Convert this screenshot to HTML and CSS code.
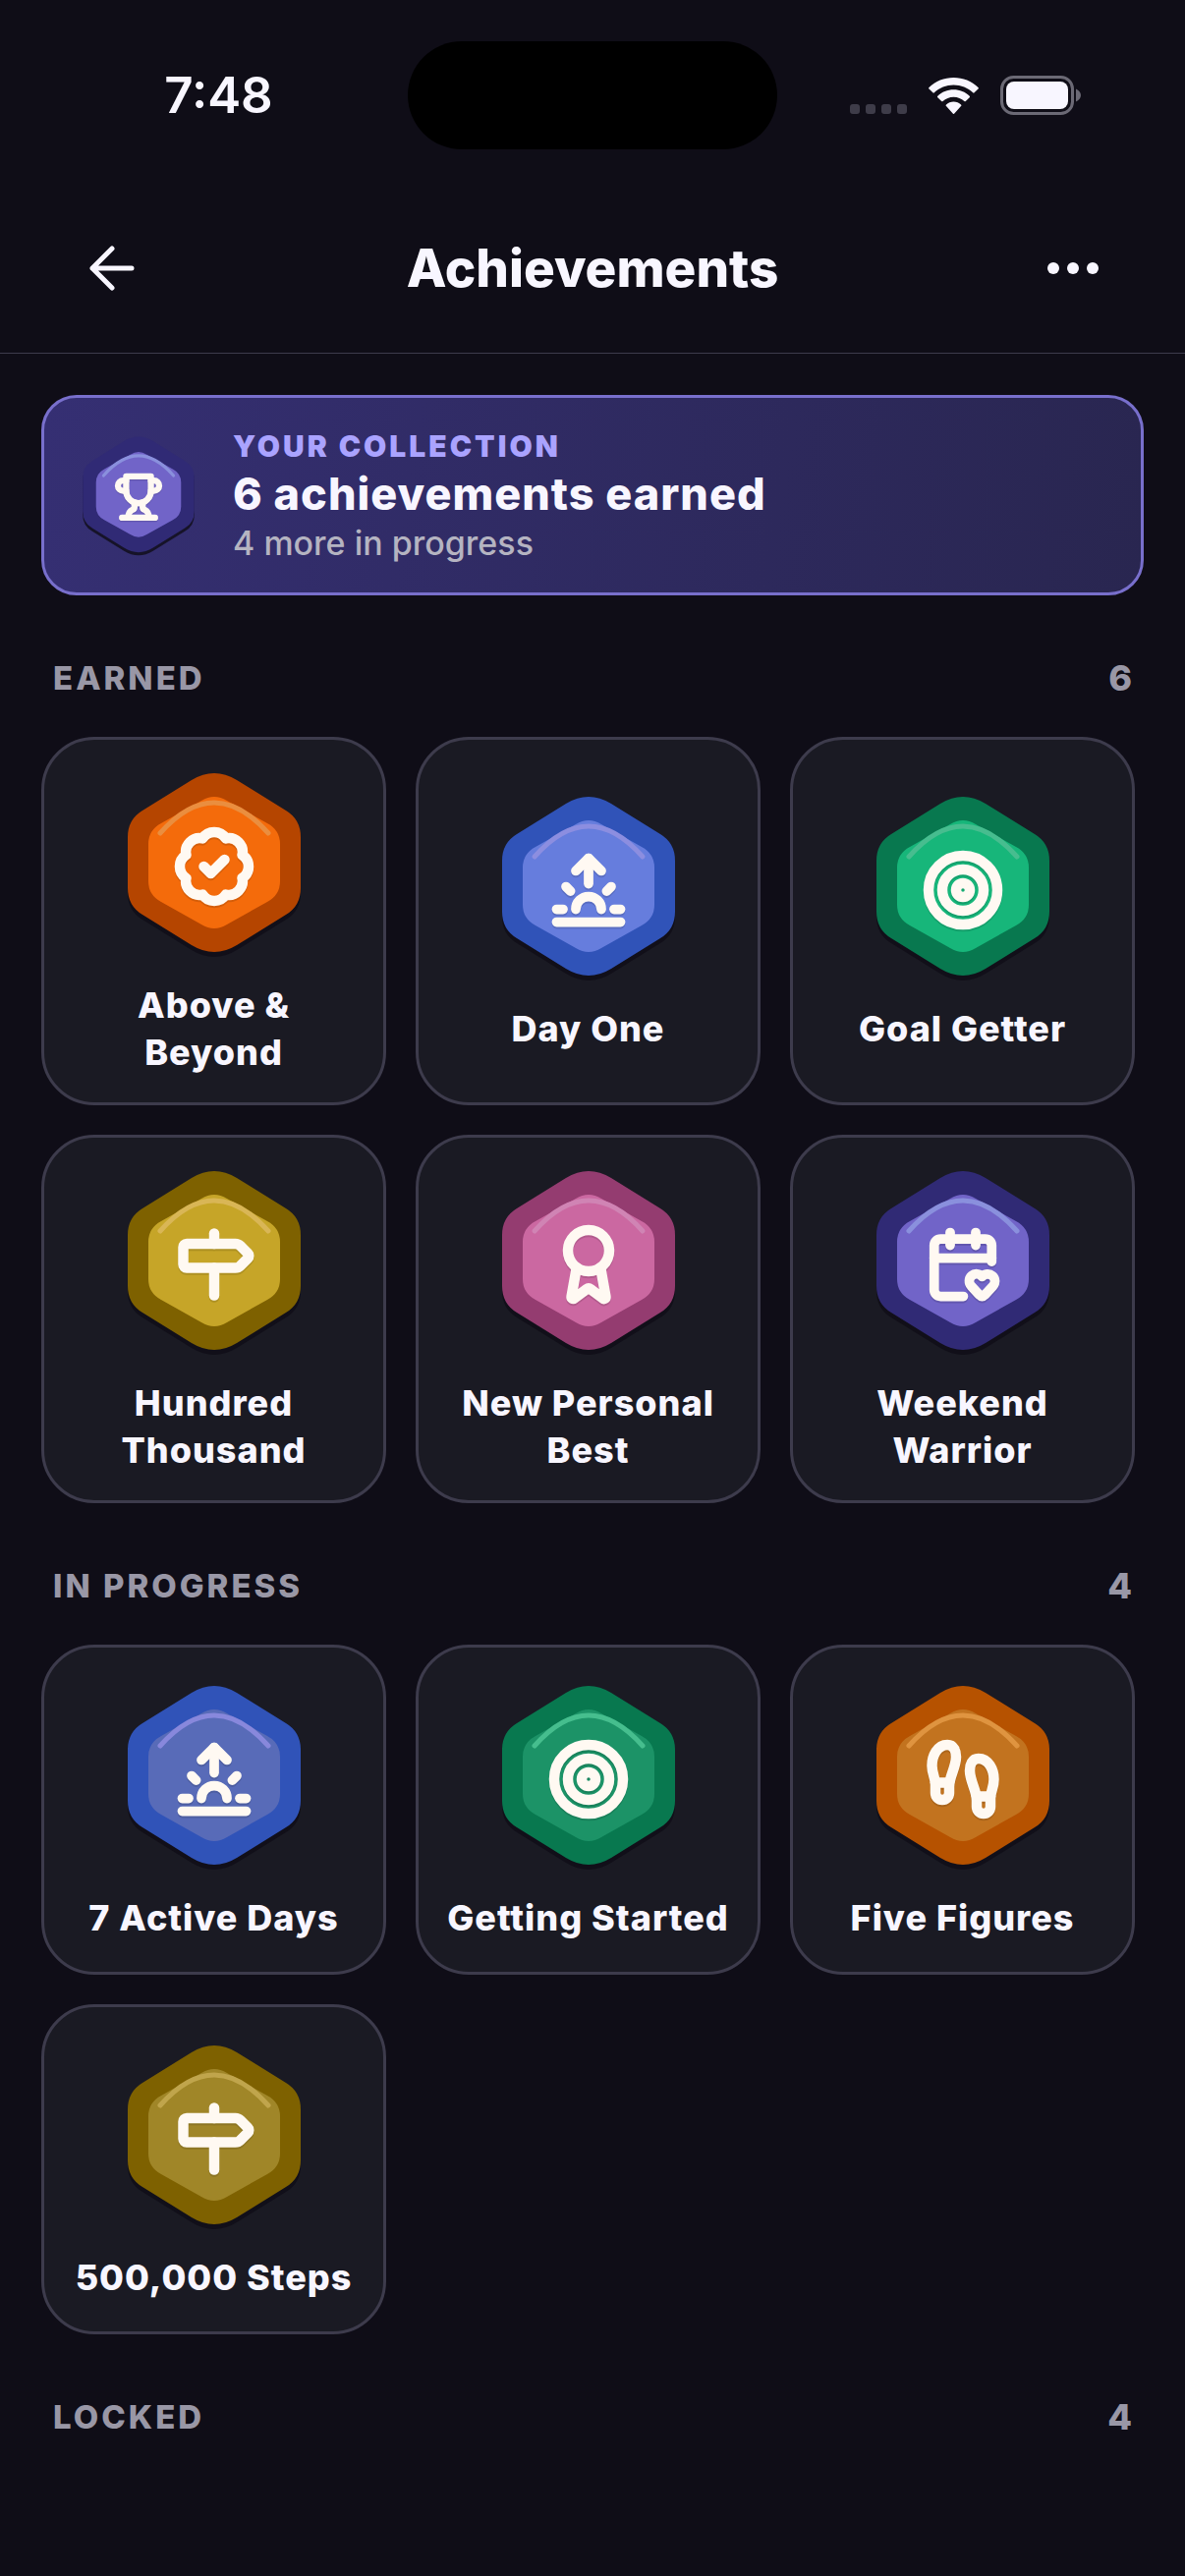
FILE: index.html
```html
<!DOCTYPE html>
<html lang="en">
  <head>
    <meta charset="UTF-8" />
    <meta name="viewport" content="width=device-width, initial-scale=1.0" />
    <title>Achievements</title>
    <link rel="stylesheet" href="styles.css">
  </head>
  <body>
    <!-- shared badge shapes and icons -->
    <svg class="sprite" aria-hidden="true">
      <symbol id="hex" viewBox="-96 -98 192 198">
        <path class="hex-shadow" d="M-23 -79Q0 -93 23 -79L73 -48Q88 -39 88 -21V31Q88 49 73 58L23 89Q0 103 -23 89L-73 58Q-88 49 -88 31V-21Q-88 -39 -73 -48Z" />
        <path class="hex-outer" d="M-23 -84Q0 -98 23 -84L73 -53Q88 -44 88 -26V26Q88 44 73 53L23 84Q0 98 -23 84L-73 53Q-88 44 -88 26V-26Q-88 -44 -73 -53Z" />
        <path class="hex-inner" d="M-13 -63Q0 -71 13 -63L54 -40Q67 -33 67 -19V19Q67 33 54 40L13 63Q0 71 -13 63L-54 40Q-67 33 -67 19V-19Q-67 -33 -54 -40Z" />
        <path class="hex-shine" d="M-55 -30Q0 -92 55 -30" />
      </symbol>
      <symbol id="trophy" viewBox="0 0 24 24">
        <path d="M6 9H4.5a2.5 2.5 0 0 1 0-5H6" />
        <path d="M18 9h1.5a2.5 2.5 0 0 0 0-5H18" />
        <path d="M4 22h16" />
        <path d="M10 14.66V17c0 .55-.47.98-.97 1.21C7.85 18.75 7 20.24 7 22" />
        <path d="M14 14.66V17c0 .55.47.98.97 1.21C16.15 18.75 17 20.24 17 22" />
        <path d="M18 2H6v7a6 6 0 0 0 12 0V2Z" />
      </symbol>
      <symbol id="badge-check" viewBox="0 0 24 24">
        <path d="M3.85 8.62a4 4 0 0 1 4.78-4.77 4 4 0 0 1 6.74 0 4 4 0 0 1 4.78 4.78 4 4 0 0 1 0 6.74 4 4 0 0 1-4.77 4.78 4 4 0 0 1-6.75 0 4 4 0 0 1-4.78-4.77 4 4 0 0 1 0-6.76Z" />
        <path d="m9 12 2 2 4-4" />
      </symbol>
      <symbol id="sunrise" viewBox="0 0 24 24">
        <path d="M12 2v8" />
        <path d="m4.93 10.93 1.41 1.41" />
        <path d="M2 18h2" />
        <path d="M20 18h2" />
        <path d="m19.07 10.93-1.41 1.41" />
        <path d="M22 22H2" />
        <path d="m8 6 4-4 4 4" />
        <path d="M16 18a4 4 0 0 0-8 0" />
      </symbol>
      <symbol id="target" viewBox="0 0 24 24">
        <circle cx="12" cy="12" r="10" />
        <circle cx="12" cy="12" r="6" />
        <circle cx="12" cy="12" r="2" />
      </symbol>
      <symbol id="milestone" viewBox="0 0 24 24">
        <path d="M12 13v8" />
        <path d="M12 3v3" />
        <path d="M4 6a1 1 0 0 0-1 1v5a1 1 0 0 0 1 1h14.172a2 2 0 0 0 1.414-.586l2.207-2.207a1 1 0 0 0 0-1.414l-2.207-2.207A2 2 0 0 0 18.172 6z" />
      </symbol>
      <symbol id="award" viewBox="0 0 24 24">
        <path d="m15.477 12.89 1.515 8.526a.5.5 0 0 1-.81.47l-3.58-2.687a1 1 0 0 0-1.197 0l-3.586 2.686a.5.5 0 0 1-.81-.469l1.514-8.526" />
        <circle cx="12" cy="8" r="6" />
      </symbol>
      <symbol id="calendar-heart" viewBox="0 0 24 24">
        <path d="M12.127 22H5a2 2 0 0 1-2-2V6a2 2 0 0 1 2-2h14a2 2 0 0 1 2 2v5.125" />
        <path d="M14.62 18.8A2.25 2.25 0 1 1 18 15.836a2.25 2.25 0 1 1 3.38 2.966l-2.626 2.856a.998.998 0 0 1-1.507 0z" />
        <path d="M16 2v4" />
        <path d="M3 10h18" />
        <path d="M8 2v4" />
      </symbol>
      <symbol id="footprints" viewBox="0 0 24 24">
        <path d="M4 16v-2.38C4 11.5 2.97 10.5 3 8c.03-2.72 1.49-6 4.5-6C9.37 2 10 3.8 10 5.5c0 3.11-2 5.66-2 8.68V16a2 2 0 1 1-4 0Z" />
        <path d="M20 20v-2.38c0-2.12 1.03-3.12 1-5.62-.03-2.72-1.49-6-4.5-6C14.63 6 14 7.8 14 9.5c0 3.11 2 5.66 2 8.68V20a2 2 0 1 0 4 0Z" />
        <path d="M16 17h4" />
        <path d="M4 13h4" />
      </symbol>
    </svg>

    <div class="status-bar">
      <time class="clock">7:48</time>
      <div class="island"></div>
      <div class="indicators">
        <svg class="signal" viewBox="0 0 58 10" aria-hidden="true">
          <rect width="10" height="10" rx="3" />
          <rect x="16" width="10" height="10" rx="3" />
          <rect x="32" width="10" height="10" rx="3" />
          <rect x="48" width="10" height="10" rx="3" />
        </svg>
        <svg class="wifi" viewBox="0 0 51 37" aria-hidden="true">
          <path d="M25.5 0C35 0 44 3.7 50.5 9.9a1 1 0 0 1 0 1.5L46.6 15.3a1 1 0 0 1-1.4 0C40 10.4 33 7.5 25.5 7.5S11 10.4 5.8 15.3a1 1 0 0 1-1.4 0L.5 11.4a1 1 0 0 1 0-1.5C7 3.7 16 0 25.5 0Z" />
          <path d="M25.5 12.3c6.2 0 11.9 2.4 16.2 6.4a1 1 0 0 1 0 1.5L37.8 24a1 1 0 0 1-1.4 0c-2.9-2.6-6.7-4.2-10.9-4.2S17.5 21.4 14.6 24a1 1 0 0 1-1.4 0L9.3 20.2a1 1 0 0 1 0-1.5c4.3-4 10-6.4 16.2-6.4Z" />
          <path d="M25.5 24.5c2.9 0 5.5 1.1 7.5 2.9a1 1 0 0 1 0 1.5l-6.7 7.6a1 1 0 0 1-1.6 0L18 28.9a1 1 0 0 1 0-1.5c2-1.8 4.6-2.9 7.5-2.9Z" />
        </svg>
        <svg class="battery" viewBox="0 0 82 40" aria-hidden="true">
          <rect class="battery-case" x="1.5" y="1.5" width="72" height="37" rx="12" />
          <rect x="6" y="6" width="63" height="28" rx="8" />
          <path class="battery-tip" d="M77 13.5c3 1.2 5 3.7 5 6.5s-2 5.3-5 6.5Z" />
        </svg>
      </div>
    </div>

    <header class="nav">
      <button class="nav-button" type="button" aria-label="Back">
        <svg class="nav-icon back-icon" viewBox="0 0 48 48">
          <path d="M24 4 4 24l20 20M4 24h40" />
        </svg>
      </button>
      <h1>Achievements</h1>
      <button class="nav-button" type="button" aria-label="More">
        <svg class="nav-icon more-icon" viewBox="0 0 52 48">
          <circle cx="6" cy="24" r="6" />
          <circle cx="26" cy="24" r="6" />
          <circle cx="46" cy="24" r="6" />
        </svg>
      </button>
    </header>

    <main>
      <section class="summary">
        <svg class="badge purple" viewBox="0 0 192 198" aria-hidden="true">
          <use href="#hex" width="192" height="198" />
          <use class="icon" href="#trophy" x="57" y="63" width="78" height="78" />
        </svg>
        <div class="summary-text">
          <p class="eyebrow">YOUR COLLECTION</p>
          <h2>6 achievements earned</h2>
          <p class="note">4 more in progress</p>
        </div>
      </section>

      <section>
        <div class="section-head">
          <h3>EARNED</h3>
          <span class="count">6</span>
        </div>
        <ul class="grid">
          <li class="card">
            <svg class="badge orange" viewBox="0 0 192 198" aria-hidden="true">
              <use href="#hex" width="192" height="198" />
              <use class="icon" href="#badge-check" x="54" y="60" width="84" height="84" />
            </svg>
            <span class="label">Above &amp; Beyond</span>
          </li>
          <li class="card">
            <svg class="badge blue" viewBox="0 0 192 198" aria-hidden="true">
              <use href="#hex" width="192" height="198" />
              <use class="icon" href="#sunrise" x="57" y="63" width="78" height="78" />
            </svg>
            <span class="label">Day One</span>
          </li>
          <li class="card">
            <svg class="badge green" viewBox="0 0 192 198" aria-hidden="true">
              <use href="#hex" width="192" height="198" />
              <use class="icon" href="#target" x="54" y="60" width="84" height="84" />
            </svg>
            <span class="label">Goal Getter</span>
          </li>
          <li class="card">
            <svg class="badge gold" viewBox="0 0 192 198" aria-hidden="true">
              <use href="#hex" width="192" height="198" />
              <use class="icon" href="#milestone" x="54" y="60" width="84" height="84" />
            </svg>
            <span class="label">Hundred Thousand</span>
          </li>
          <li class="card">
            <svg class="badge pink" viewBox="0 0 192 198" aria-hidden="true">
              <use href="#hex" width="192" height="198" />
              <use class="icon" href="#award" x="54" y="60" width="84" height="84" />
            </svg>
            <span class="label">New Personal Best</span>
          </li>
          <li class="card">
            <svg class="badge purple" viewBox="0 0 192 198" aria-hidden="true">
              <use href="#hex" width="192" height="198" />
              <use class="icon" href="#calendar-heart" x="57" y="63" width="78" height="78" />
            </svg>
            <span class="label">Weekend Warrior</span>
          </li>
        </ul>
      </section>

      <section>
        <div class="section-head">
          <h3>IN PROGRESS</h3>
          <span class="count">4</span>
        </div>
        <ul class="grid">
          <li class="card">
            <svg class="badge blue muted" viewBox="0 0 192 198" aria-hidden="true">
              <use href="#hex" width="192" height="198" />
              <use class="icon" href="#sunrise" x="57" y="63" width="78" height="78" />
            </svg>
            <span class="label">7 Active Days</span>
          </li>
          <li class="card">
            <svg class="badge green muted" viewBox="0 0 192 198" aria-hidden="true">
              <use href="#hex" width="192" height="198" />
              <use class="icon" href="#target" x="54" y="60" width="84" height="84" />
            </svg>
            <span class="label">Getting Started</span>
          </li>
          <li class="card">
            <svg class="badge orange muted" viewBox="0 0 192 198" aria-hidden="true">
              <use href="#hex" width="192" height="198" />
              <use class="icon" href="#footprints" x="54" y="60" width="84" height="84" />
            </svg>
            <span class="label">Five Figures</span>
          </li>
          <li class="card">
            <svg class="badge gold muted" viewBox="0 0 192 198" aria-hidden="true">
              <use href="#hex" width="192" height="198" />
              <use class="icon" href="#milestone" x="54" y="60" width="84" height="84" />
            </svg>
            <span class="label">500,000 Steps</span>
          </li>
        </ul>
      </section>

      <section>
        <div class="section-head">
          <h3>LOCKED</h3>
          <span class="count">4</span>
        </div>
      </section>
    </main>
  </body>
</html>
```

FILE: styles.css
```css
* {
  box-sizing: border-box;
}
body {
  margin: 0;
  min-height: 100vh;
  background-color: #0f0d17;
  color: #f8f6ff;
  font-family: Inter, "Liberation Sans", sans-serif;
}
h1,
h2,
h3,
p,
ul {
  margin: 0;
  padding: 0;
}
.sprite {
  display: none;
}

/* status bar */
.status-bar {
  display: grid;
  grid-template-columns: 1fr 376px 1fr;
  align-items: center;
  padding: 42px 0 34px;
}
.clock {
  padding-left: 30px;
  font-size: 51px;
  line-height: 60px;
  font-weight: 600;
  text-align: center;
}
.island {
  height: 110px;
  border-radius: 55px;
  background-color: #000;
}
.indicators {
  display: flex;
  align-items: center;
  justify-content: flex-end;
  gap: 22px;
  padding-right: 106px;
  fill: #f8f6ff;
}
.signal {
  width: 58px;
  height: 10px;
  margin-top: 27px;
  fill: #3e3c49;
}
.wifi {
  width: 51px;
  height: 37px;
}
.battery {
  width: 82px;
  height: 40px;
}
.battery-case {
  fill: none;
  stroke: #6b6975;
  stroke-width: 3;
}
.battery-tip {
  fill: #6b6975;
}

/* navigation */
.nav {
  display: flex;
  align-items: center;
  justify-content: space-between;
  height: 174px;
  padding: 0 48px;
  border-bottom: 1px solid #3d3b4c;
}
.nav-button {
  display: flex;
  align-items: center;
  justify-content: center;
  width: 132px;
  height: 132px;
  padding: 0;
  border: none;
  background: none;
  cursor: pointer;
}
.nav-icon {
  height: 48px;
}
.back-icon {
  fill: none;
  stroke: #f8f6ff;
  stroke-width: 5;
  stroke-linecap: round;
  stroke-linejoin: round;
}
.more-icon {
  fill: #f8f6ff;
}
.nav h1 {
  font-size: 53px;
  line-height: 66px;
  font-weight: 800;
}

main {
  padding: 42px;
}

/* collection summary */
.summary {
  display: flex;
  align-items: center;
  gap: 34px;
  min-height: 204px;
  padding: 24px 34px;
  border: 3px solid #786fcc;
  border-radius: 36px;
  background: linear-gradient(100deg, #352f73, #292650);
}
.summary .badge {
  width: 124px;
  height: 128px;
}
.summary-text {
  display: flex;
  flex-direction: column;
  gap: 2px;
}
.eyebrow {
  color: #aaa3ff;
  font-size: 30px;
  line-height: 39px;
  font-weight: 900;
  letter-spacing: 3px;
}
.summary h2 {
  font-size: 45px;
  line-height: 54px;
  font-weight: 800;
  letter-spacing: 1px;
}
.note {
  color: #b5b4c1;
  font-size: 34px;
  line-height: 42px;
  font-weight: 500;
}

/* sections */
.section-head {
  display: flex;
  align-items: center;
  justify-content: space-between;
  margin: 62px 12px 37px;
  color: #9997a6;
  line-height: 45px;
}
.section-head h3 {
  font-size: 33px;
  font-weight: 800;
  letter-spacing: 3px;
}
.count {
  font-size: 36px;
  font-weight: 800;
}
.grid {
  display: grid;
  grid-template-columns: repeat(3, 1fr);
  gap: 30px;
  padding-right: 9px;
  list-style: none;
}
.card {
  display: flex;
  flex-direction: column;
  align-items: center;
  justify-content: center;
  gap: 21px;
  min-height: 336px;
  padding: 27px 24px;
  border: 3px solid #3d3b4c;
  border-radius: 54px;
  background-color: #1a1a23;
}
.label {
  font-size: 36px;
  line-height: 48px;
  font-weight: 800;
  letter-spacing: 1px;
  text-align: center;
}

/* badges */
.badge {
  flex: none;
  width: 192px;
  height: 198px;
}
.hex-shadow {
  fill: #0f0d17;
  fill-opacity: 0.8;
}
.hex-outer {
  fill: var(--outer);
}
.hex-inner {
  fill: var(--inner);
}
.hex-shine {
  fill: none;
  stroke: var(--shine);
  stroke-width: 5;
  stroke-linecap: round;
}
.icon {
  fill: none;
  stroke: #fff9f2;
  stroke-width: 3;
  stroke-linecap: round;
  stroke-linejoin: round;
  filter: drop-shadow(0 2px 0 rgba(0, 0, 0, 0.12));
}
.orange {
  --outer: #b54500;
  --inner: #f46b0b;
  --shine: #ea8e3f;
}
.blue {
  --outer: #3053b8;
  --inner: #667ddd;
  --shine: #8c8ee0;
}
.green {
  --outer: #08784f;
  --inner: #17b67a;
  --shine: #47bd8f;
}
.gold {
  --outer: #7e6100;
  --inner: #c6a528;
  --shine: #d9b656;
}
.pink {
  --outer: #943c70;
  --inner: #cb68a1;
  --shine: #d084b4;
}
.purple {
  --outer: #302a75;
  --inner: #7164c8;
  --shine: #8a90dd;
}
.blue.muted {
  --inner: #586bb8;
  --shine: #8888dc;
}
.green.muted {
  --inner: #1c9367;
  --shine: #46be8e;
}
.orange.muted {
  --outer: #b65200;
  --inner: #c2731f;
  --shine: #df9440;
}
.gold.muted {
  --inner: #a08628;
  --shine: #c0a54c;
}
```
